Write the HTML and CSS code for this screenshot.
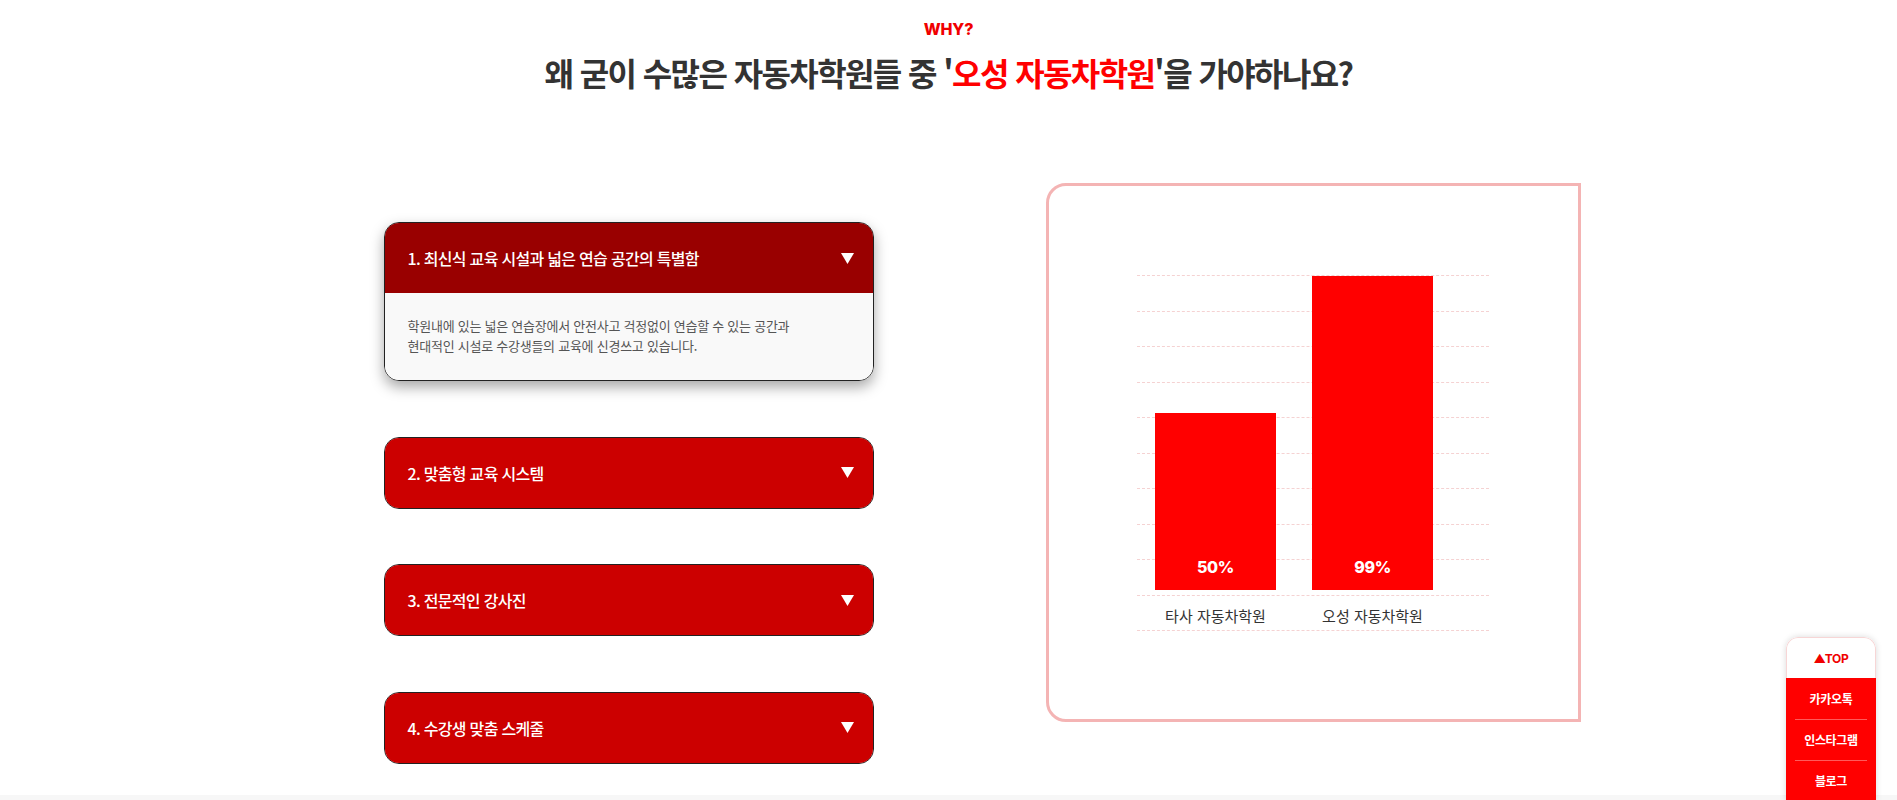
FILE: index.html
```html
<!DOCTYPE html>
<html lang="ko">
<head>
<meta charset="utf-8">
<title>WHY? 오성 자동차학원</title>
<link rel="stylesheet" href="styles.css">
</head>
<body>
<section class="why">
  <header class="why-head">
    <p class="why-kicker">WHY?</p>
    <h2 class="why-title">왜 굳이 수많은 자동차학원들 중 '<span class="accent">오성 자동차학원</span>'을 가야하나요?</h2>
  </header>

  <div class="why-row">
    <div class="accordion">
      <div class="acc-item open">
        <div class="acc-head">
          <span class="acc-title">1. 최신식 교육 시설과 넓은 연습 공간의 특별함</span>
          <svg class="acc-arrow" width="13" height="11" viewBox="0 0 13 11"><polygon points="0,0 13,0 6.5,11" fill="#fff"/></svg>
        </div>
        <div class="acc-body">
          <p>학원내에 있는 넓은 연습장에서 안전사고 걱정없이 연습할 수 있는 공간과<br>현대적인 시설로 수강생들의 교육에 신경쓰고 있습니다.</p>
        </div>
      </div>
      <div class="acc-item">
        <div class="acc-head">
          <span class="acc-title">2. 맞춤형 교육 시스템</span>
          <svg class="acc-arrow" width="13" height="11" viewBox="0 0 13 11"><polygon points="0,0 13,0 6.5,11" fill="#fff"/></svg>
        </div>
      </div>
      <div class="acc-item">
        <div class="acc-head">
          <span class="acc-title">3. 전문적인 강사진</span>
          <svg class="acc-arrow" width="13" height="11" viewBox="0 0 13 11"><polygon points="0,0 13,0 6.5,11" fill="#fff"/></svg>
        </div>
      </div>
      <div class="acc-item">
        <div class="acc-head">
          <span class="acc-title">4. 수강생 맞춤 스케줄</span>
          <svg class="acc-arrow" width="13" height="11" viewBox="0 0 13 11"><polygon points="0,0 13,0 6.5,11" fill="#fff"/></svg>
        </div>
      </div>
    </div>

    <div class="chart-box">
      <div class="chart">
        <div class="grid-lines">
          <i></i><i></i><i></i><i></i><i></i><i></i><i></i><i></i><i></i><i></i><i></i>
        </div>
        <div class="bars">
          <div class="bar" style="height:177px"><span>50%</span></div>
          <div class="bar" style="height:314px"><span>99%</span></div>
        </div>
        <div class="labels">
          <span>타사 자동차학원</span>
          <span>오성 자동차학원</span>
        </div>
      </div>
    </div>
  </div>
</section>

<section class="next"></section>

<nav class="quick">
  <a class="quick-top">▲TOP</a>
  <a class="quick-link">카카오톡</a>
  <a class="quick-link">인스타그램</a>
  <a class="quick-link">블로그</a>
</nav>
</body>
</html>
```

FILE: styles.css
```css
* { box-sizing: border-box; }
html, body { margin: 0; padding: 0; }
body {
  font-family: "Noto Sans CJK KR", "Noto Sans", sans-serif;
  color: #333;
  background: #fff;
  overflow: hidden;
}
p { margin: 0; }

.why { height: 795px; }

.why-head { text-align: center; padding-top: 19px; }
.why-kicker {
  font-family: "Inter", "Noto Sans CJK KR", sans-serif;
  font-weight: 800;
  font-size: 16px;
  line-height: 20px;
  color: #f00000;
  letter-spacing: -0.2px;
}
.why-title {
  margin: 13px 0 0;
  font-size: 32px;
  line-height: 40px;
  font-weight: 700;
  color: #333;
  letter-spacing: -1.6px;
}
.why-title .accent { color: #ff0000; }

.why-row {
  display: flex;
  align-items: flex-start;
  margin-top: 91px;
  margin-left: calc(50% - 565px);
  gap: 172px;
}

.accordion { width: 490px; padding-top: 39px; }
.acc-item {
  border: 1px solid #222;
  border-radius: 15px;
  overflow: hidden;
  margin-bottom: 55.5px;
}
.acc-item.open { box-shadow: 0 6px 14px rgba(0,0,0,0.35); }
.acc-head {
  height: 70px;
  background: #cc0000;
  display: flex;
  align-items: center;
  justify-content: space-between;
  padding: 0 19px 0 23px;
}
.acc-item.open .acc-head { background: #990000; }
.acc-title {
  color: #fff;
  font-size: 16px;
  font-weight: 500;
  letter-spacing: -0.7px;
}
.acc-arrow { display: block; }
.acc-body {
  background: #f9f9f9;
  padding: 23px 23px 24px;
}
.acc-body p {
  font-size: 13px;
  line-height: 20px;
  color: #555;
  letter-spacing: -0.25px;
}

.chart-box {
  width: 535px;
  height: 539px;
  border: 3px solid #f4b4b4;
  border-radius: 20px 0 0 20px;
  padding-top: 89px;
  display: flex;
  justify-content: center;
}
.chart {
  position: relative;
  width: 352px;
  height: 356px;
}
.grid-lines {
  position: absolute;
  inset: 0;
  display: flex;
  flex-direction: column;
  justify-content: space-between;
}
.grid-lines i {
  display: block;
  height: 0;
  border-top: 1px dashed #f5d2d2;
}
.bars {
  position: relative;
  height: 314px;
  margin-top: 1px;
  display: flex;
  align-items: flex-end;
  gap: 36px;
  padding-left: 18px;
}
.bar {
  width: 121px;
  background: #ff0000;
  display: flex;
  align-items: flex-end;
  justify-content: center;
  padding-bottom: 13px;
}
.bar span {
  font-family: "Inter", "Noto Sans", sans-serif;
  font-weight: 800;
  font-size: 16px;
  line-height: 20px;
  color: #fff;
  letter-spacing: -0.3px;
}
.labels {
  position: relative;
  display: flex;
  gap: 36px;
  padding-left: 18px;
  margin-top: 16px;
}
.labels span {
  width: 121px;
  text-align: center;
  font-size: 15px;
  line-height: 20px;
  color: #333;
  white-space: nowrap;
}

.next { height: 200px; background: #f7f7f7; }

.quick {
  position: fixed;
  top: 637px;
  right: 21px;
  width: 90px;
  border-radius: 12px 12px 0 0;
  overflow: hidden;
  box-shadow: 0 0 6px rgba(0,0,0,0.15);
  display: flex;
  flex-direction: column;
}
.quick a {
  display: flex;
  align-items: center;
  justify-content: center;
  height: 41px;
  font-size: 12px;
  font-weight: 700;
  text-decoration: none;
  letter-spacing: -0.3px;
}
.quick-top {
  background: #fff;
  color: #f00000;
  font-family: "Inter", "Noto Sans CJK KR", sans-serif;
  font-size: 13px;
  border: 1px solid #f7d6d6;
  border-bottom: none;
  border-radius: 12px 12px 0 0;
}
.quick-link {
  background: #ff0000;
  color: #fff;
  position: relative;
}
.quick-link + .quick-link::before {
  content: "";
  position: absolute;
  top: 0;
  left: 9px;
  right: 9px;
  border-top: 1px solid #ff5a5a;
}
```
